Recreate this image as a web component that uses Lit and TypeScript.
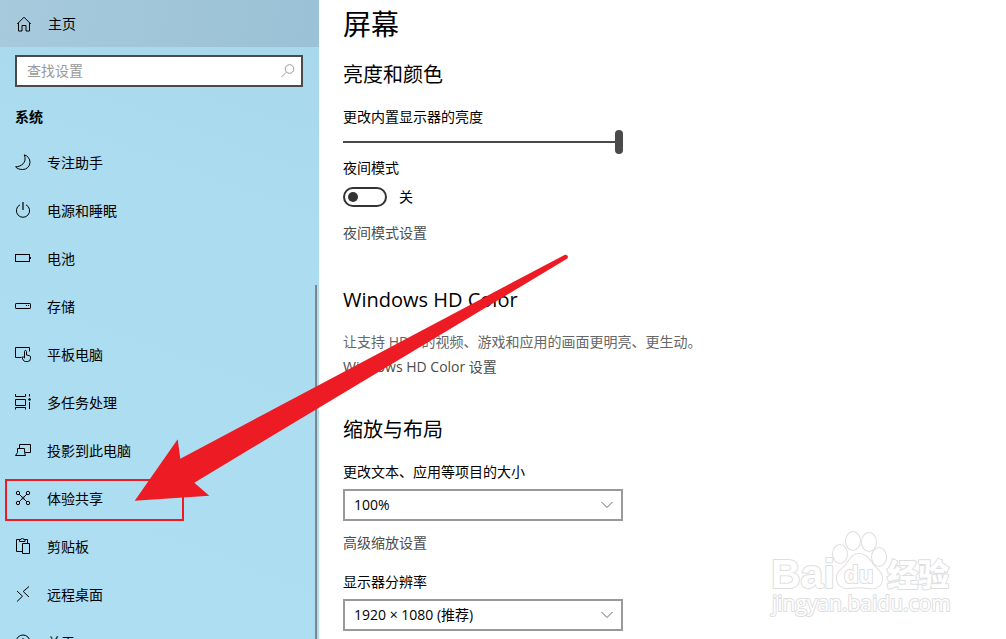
import { LitElement, html, css, svg } from "lit";
import { customElement, state } from "lit/decorators.js";

const icons = {
  home: svg`<path d="M1.2 8 8 1.2 14.8 8M2.500 7v8h3.500v-5.500h4v5.500h3.500V7"/>`,
  focus: svg`<path d="M9.3.8C13 2 15 5 15 8.3A7.2 7.2 0 0 1 7.5 15.5C4.5 15.5 2 14.6.6 12.8C5.5 12.8 12.5 9 9.3.8z"/>`,
  power: svg`<path d="M5 2.8a6.6 6.6 0 1 0 6 0"/><path stroke-width="2" opacity=".6" d="M8 0v8"/>`,
  battery: svg`<rect x=".5" y="4.5" width="14" height="7"/><path d="M15.5 7v2"/>`,
  storage: svg`<rect x=".5" y="5.5" width="15" height="5" rx=".6"/><path d="M11 7.5h1M13 7.5h1"/>`,
  tablet: svg`<path d="M6.500 11.500h-6v-10h14v4"/><path d="M9.500 12V5.500a1 1 0 0 1 2 0V9l3 .7q1 .3 1 1.300v1.500q0 3-3 3h-2q-1.500 0-2.200-1.300L7.200 11.800q-.2-1.300 1-1l1.300 1.200"/>`,
  multitask: svg`<path d="M.5 0v2.500h10V0M.5 5.500h10v6H.5zM.5 15.500v-2h10v2M14.500 0v2.500M14.500 8v7"/><circle cx="14.500" cy="5.500" r="1" fill="currentColor" stroke-width=".6"/>`,
  project: svg`<path d="M4.500 6V2.500h11v8H10"/><path d="M2.500 6.500h7v4l1 3H.5l2-3z"/>`,
  share: svg`<circle cx="3" cy="3" r="1.700"/><circle cx="13" cy="3" r="1.700"/><circle cx="3" cy="13" r="1.700"/><circle cx="13" cy="13" r="1.700"/><circle cx="8" cy="8" r="1"/><path d="M4.200 4.200 7.300 7.300M11.800 4.200 8.700 7.300M4.200 11.800 7.300 8.700M11.800 11.800 8.700 8.700"/>`,
  clipboard: svg`<path d="M7 13.500H1.500v-12h3M10 1.500h2.500V5M4.500 3.500v-2H6a1.300 1.300 0 0 1 2.600 0H10v2zM7.500 5.500h7v10h-7z"/>`,
  remote: svg`<path d="M2 5l5.500 5.200L2 15.500M14 .5 8.200 5.500 14 11"/>`,
  about: svg`<circle cx="8" cy="8" r="7"/><path d="M8 4v1.500M8 7v5"/>`,
};

type IconName = keyof typeof icons;

interface NavEntry {
  icon: IconName;
  label: string;
  marked?: boolean;
}

const entries: NavEntry[] = [
  { icon: "focus", label: "专注助手" },
  { icon: "power", label: "电源和睡眠" },
  { icon: "battery", label: "电池" },
  { icon: "storage", label: "存储" },
  { icon: "tablet", label: "平板电脑" },
  { icon: "multitask", label: "多任务处理" },
  { icon: "project", label: "投影到此电脑" },
  { icon: "share", label: "体验共享", marked: true },
  { icon: "clipboard", label: "剪贴板" },
  { icon: "remote", label: "远程桌面" },
  { icon: "about", label: "关于" },
];

const glyph = (name: IconName) =>
  html`<svg class="icon" viewBox="0 0 16 16" aria-hidden="true">${icons[name]}</svg>`;

@customElement("settings-nav")
export class SettingsNav extends LitElement {
  static styles = css`
    :host {
      display: block;
      position: relative;
      overflow: hidden;
      background: linear-gradient(200deg, #a8d7ec 0%, #abdcef 35%, #aedef1 100%);
      color: #000;
    }
    .icon {
      width: 16px;
      height: 16px;
      flex: none;
      fill: none;
      stroke: currentColor;
      stroke-width: 1;
    }
    .link {
      display: flex;
      align-items: center;
      gap: 16px;
      padding-left: 15px;
      height: 48px;
      color: inherit;
      text-decoration: none;
    }
    .home {
      padding-left: 16px;
      height: 47px;
      background: linear-gradient(100deg, #a7cadd, #9ac1d5);
    }
    .search {
      display: flex;
      align-items: center;
      margin: 8px 16px 0 15px;
      padding: 0 5px 0 10px;
      height: 32px;
      box-sizing: border-box;
      border: 2px solid #4a4a4a;
      background: #fff;
      color: #999;
    }
    .field {
      flex: 1;
      min-width: 0;
      padding: 0;
      border: 0;
      outline: 0;
      background: none;
      font: inherit;
      color: #000;
    }
    .field::placeholder {
      color: #999;
      opacity: 1;
    }
    .group {
      margin: 20px 15px 12px;
      font-size: 14px;
      line-height: 20px;
      font-weight: 700;
    }
    .list {
      margin: 0;
      padding: 0;
      list-style: none;
    }
    .item {
      position: relative;
    }
    .item .icon {
      margin-bottom: 2px;
    }
    .marked::after {
      content: "";
      position: absolute;
      left: 5px;
      top: 4px;
      width: 179px;
      height: 42px;
      box-sizing: border-box;
      border: 2px solid #ed1c24;
    }
    .thumb {
      position: absolute;
      right: 2px;
      top: 285px;
      bottom: 0;
      width: 2px;
      background: #7c868b;
    }
  `;

  render() {
    return html`
      <a class="link home" href="#home">${glyph("home")}<span>主页</span></a>
      <label class="search">
        <input class="field" type="text" placeholder="查找设置" aria-label="查找设置" />
        <svg class="icon" viewBox="0 0 16 16" aria-hidden="true">
          <circle cx="9.500" cy="6" r="4.300" />
          <path d="M6.300 9.200 1.500 14" />
        </svg>
      </label>
      <h2 class="group">系统</h2>
      <ul class="list">
        ${entries.map(
          (e) => html`<li class=${e.marked ? "item marked" : "item"}>
            <a class="link" href="#${e.icon}">${glyph(e.icon)}<span>${e.label}</span></a>
          </li>`
        )}
      </ul>
      <div class="thumb"></div>
    `;
  }
}

@customElement("display-page")
export class DisplayPage extends LitElement {
  static styles = css`
    :host {
      display: block;
      overflow: hidden;
      padding: 0 24px;
      color: #000;
    }
    .title {
      margin: 4px 0 17px;
      font-size: 28px;
      line-height: 40px;
      font-weight: 400;
    }
    .heading {
      margin: 0 0 18px;
      font-size: 20px;
      line-height: 28px;
      font-weight: 400;
    }
    .section {
      display: flex;
      flex-direction: column;
      align-items: flex-start;
      margin-bottom: 40px;
    }
    .label {
      line-height: 20px;
    }
    .slider {
      appearance: none;
      width: 280px;
      max-width: 100%;
      height: 24px;
      margin: 3px 0 4px;
      background: linear-gradient(#4a4a4a, #4a4a4a) center / 100% 2px no-repeat;
    }
    .slider::-webkit-slider-thumb {
      appearance: none;
      width: 8px;
      height: 24px;
      border-radius: 4px;
      background: #4a4a4a;
    }
    .row {
      display: flex;
      align-items: center;
      gap: 12px;
      height: 20px;
      margin: 9px 0 16px;
    }
    .toggle {
      appearance: none;
      display: flex;
      align-items: center;
      width: 44px;
      height: 20px;
      margin: 0;
      padding: 0 3px;
      box-sizing: border-box;
      border: 2px solid #333;
      border-radius: 10px;
    }
    .toggle::before {
      content: "";
      width: 10px;
      height: 10px;
      border-radius: 50%;
      background: #333;
    }
    .toggle:checked {
      justify-content: flex-end;
    }
    .link {
      line-height: 20px;
      color: #4c4c4c;
      text-decoration: none;
    }
    .note {
      margin: 0 0 5px;
      line-height: 20px;
      color: #666;
    }
    .combo {
      display: grid;
      align-items: center;
      width: 280px;
      max-width: 100%;
      margin: 7px 0 12px;
    }
    .select {
      grid-area: 1 / 1;
      appearance: none;
      height: 32px;
      padding: 0 32px 0 9px;
      border: 2px solid #999;
      border-radius: 0;
      background: #fff;
      font: inherit;
      color: #000;
    }
    .chevron {
      grid-area: 1 / 1;
      justify-self: end;
      width: 12px;
      height: 8px;
      margin-right: 10px;
      pointer-events: none;
      fill: none;
      stroke: #666;
    }
    .spaced {
      margin-top: 19px;
    }
    .tight {
      margin-bottom: 39px;
    }
    .first {
      margin-bottom: 43px;
    }
  `;

  @state() private night = false;

  private combo(id: string, values: string[]) {
    return html`<div class="combo">
      <select class="select" id=${id}>
        ${values.map((v) => html`<option>${v}</option>`)}
      </select>
      <svg class="chevron" viewBox="0 0 12 8" aria-hidden="true"><path d="M.5 1 6 6.500 11.500 1" /></svg>
    </div>`;
  }

  render() {
    return html`
      <h1 class="title">屏幕</h1>
      <section class="section first">
        <h2 class="heading">亮度和颜色</h2>
        <label class="label" for="brightness">更改内置显示器的亮度</label>
        <input class="slider" id="brightness" type="range" min="0" max="100" value="100" />
        <label class="label" for="night">夜间模式</label>
        <div class="row">
          <input
            class="toggle"
            id="night"
            type="checkbox"
            role="switch"
            .checked=${this.night}
            @change=${(e: Event) => (this.night = (e.target as HTMLInputElement).checked)}
          />
          <span>${this.night ? "开" : "关"}</span>
        </div>
        <a class="link" href="#night">夜间模式设置</a>
      </section>
      <section class="section tight">
        <h2 class="heading">Windows HD Color</h2>
        <p class="note">让支持 HDR 的视频、游戏和应用的画面更明亮、更生动。</p>
        <a class="link" href="#hdcolor">Windows HD Color 设置</a>
      </section>
      <section class="section">
        <h2 class="heading">缩放与布局</h2>
        <label class="label" for="scale">更改文本、应用等项目的大小</label>
        ${this.combo("scale", ["100%", "125%", "150%"])}
        <a class="link" href="#scaling">高级缩放设置</a>
        <label class="label spaced" for="resolution">显示器分辨率</label>
        ${this.combo("resolution", ["1920 × 1080 (推荐)", "1600 × 900"])}
      </section>
    `;
  }
}

@customElement("app-root")
export class AppRoot extends LitElement {
  static styles = css`
    :host {
      display: grid;
      grid-template-columns: 319px minmax(0, 1fr);
      grid-template-rows: minmax(0, 1fr);
      position: relative;
      height: 100vh;
      overflow: hidden;
      background: #fff;
      font-family: "Open Sans", "Noto Sans CJK SC", sans-serif;
      font-size: 14px;
      line-height: 20px;
    }
    .arrow {
      position: absolute;
      left: 134px;
      top: 254px;
      width: 436px;
      height: 248px;
      fill: #ed1c24;
      pointer-events: none;
    }
    .watermark {
      position: absolute;
      right: 50px;
      bottom: 19px;
      width: 190px;
      height: 94px;
      pointer-events: none;
      fill: #fff;
      stroke: #dedede;
      stroke-width: 2;
      paint-order: stroke;
      stroke-linejoin: round;
    }
    .brand {
      font: 700 41px "Liberation Sans", sans-serif;
    }
    .small {
      font: 700 24px "Liberation Sans", sans-serif;
    }
    .cjk {
      font: 900 31px "Noto Sans CJK SC", sans-serif;
    }
    .site {
      font: 400 21px "Open Sans", sans-serif;
    }
  `;

  render() {
    return html`
      <settings-nav></settings-nav>
      <display-page></display-page>
      <svg class="watermark" viewBox="0 0 190 94" aria-hidden="true">
        <text class="brand" x="5" y="62">Bai</text>
        <ellipse cx="74" cy="28" rx="7" ry="9" />
        <ellipse cx="87" cy="15" rx="7" ry="9" />
        <ellipse cx="103" cy="16" rx="7" ry="9" />
        <ellipse cx="113" cy="31" rx="7" ry="9" />
        <path d="M93 28c8 0 11 7 15 12 5 5 9 8 8 14-1 8-8 9-14 8-6-1-12-1-18 0-8 1-13-3-13-10 0-6 4-8 9-13 4-5 6-11 13-11z" />
        <text class="small" x="78" y="57">du</text>
        <text class="cjk" x="121" y="60">经验</text>
        <text class="site" x="6" y="85">jingyan.baidu.com</text>
      </svg>
      <svg class="arrow" viewBox="0 0 436 248" aria-hidden="true">
        <path d="M.7 246.700 43.700 185.300 46.300 204.700 430.500 .9C433.500 .3 435 3 433 4.700L60.300 228.700 75.300 241.700Z" />
      </svg>
    `;
  }
}
